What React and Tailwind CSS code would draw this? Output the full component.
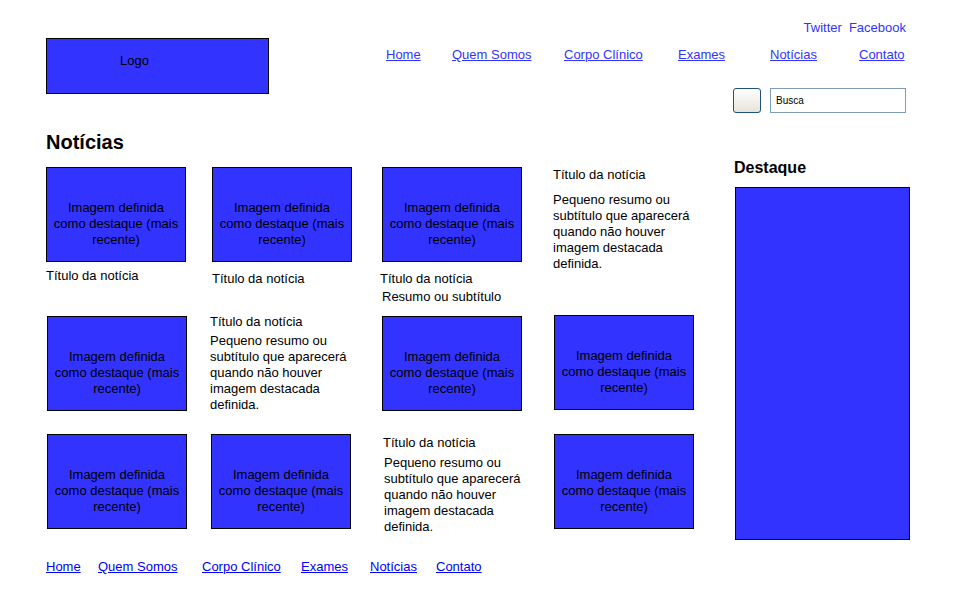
const ImageBox = ({ className = '' }) => (
  <div className={`w-[140px] h-[95px] border border-black bg-[#3333ff] pt-[32px] text-center leading-[16px] text-black ${className}`}>
    Imagem definida
    <br />
    como destaque (mais
    <br />
    recente)
  </div>
);

const Summary = ({ className = '' }) => (
  <p className={`leading-[16px] ${className}`}>
    Pequeno resumo ou
    <br />
    subtítulo que aparecerá
    <br />
    quando não houver
    <br />
    imagem destacada
    <br />
    definida.
  </p>
);

const Title = ({ className = '' }) => <p className={`leading-[16px] ${className}`}>Título da notícia</p>;

export default function App() {
  const topNav = [
    ['Home', 'w-[66px]'],
    ['Quem Somos', 'w-[112px]'],
    ['Corpo Clínico', 'w-[114px]'],
    ['Exames', 'w-[92px]'],
    ['Notícias', 'w-[89px]'],
    ['Contato', 'w-[47px]'],
  ];
  const footNav = [
    ['Home', 'w-[52px]'],
    ['Quem Somos', 'w-[104px]'],
    ['Corpo Clínico', 'w-[99px]'],
    ['Exames', 'w-[69px]'],
    ['Notícias', 'w-[66px]'],
    ['Contato', 'w-[60px]'],
  ];

  return (
    <div className="w-[960px] h-[600px] bg-white text-black text-[13px] font-['Liberation_Sans',Arial,sans-serif] overflow-hidden">
      {/* header */}
      <header className="flex pl-[46px] pr-[54px]">
        <div className="mt-[38px] w-[223px] h-[56px] border border-black bg-[#3333ff] pl-[73px] pt-[14px] leading-[16px]">
          Logo
        </div>
        <div className="ml-auto flex flex-col items-end">
          <div className="mt-[20px] flex gap-[7px] leading-[16px] text-[#3333ff]">
            <a href="#">Twitter</a>
            <a href="#">Facebook</a>
          </div>
          <nav className="mt-[11px] flex leading-[16px]">
            {topNav.map(([label, w]) => (
              <div key={label} className={w}>
                <a href="#" className="underline text-[#3333ff]">{label}</a>
              </div>
            ))}
          </nav>
          <div className="mt-[25px] flex gap-[9px]">
            <button className="w-[28px] h-[25px] rounded-[3px] border border-[#1c5180] bg-gradient-to-b from-white to-[#e6e3d8]" />
            <input
              readOnly
              defaultValue="Busca"
              className="w-[136px] h-[25px] border border-[#7f9db9] pl-[5px] text-[10px] text-black outline-none"
            />
          </div>
        </div>
      </header>

      {/* content */}
      <main className="flex pl-[46px]">
        <section className="w-[688px]">
          <h1 className="mt-[17px] text-[20px] leading-[24px] font-bold">Notícias</h1>

          <div className="mt-[13px] flex h-[148px]">
            <div className="w-[166px]">
              <ImageBox />
              <Title className="mt-[6px]" />
            </div>
            <div className="w-[170px]">
              <ImageBox />
              <Title className="mt-[9px]" />
            </div>
            <div className="w-[171px]">
              <ImageBox />
              <Title className="mt-[9px] -ml-[2px]" />
              <p className="mt-[2px] leading-[16px]">Resumo ou subtítulo</p>
            </div>
            <div>
              <Title />
              <Summary className="mt-[9px]" />
            </div>
          </div>

          <div className="flex h-[119px]">
            <div className="w-[166px]">
              <ImageBox className="ml-[1px] mt-[1px]" />
            </div>
            <div className="w-[170px] -ml-[2px] pr-[2px]">
              <Title className="-mt-[1px]" />
              <Summary className="mt-[3px]" />
            </div>
            <div className="w-[171px] ml-[2px]">
              <ImageBox className="mt-[1px]" />
            </div>
            <div>
              <ImageBox className="ml-[1px]" />
            </div>
          </div>

          <div className="flex h-[95px]">
            <div className="w-[166px]">
              <ImageBox className="ml-[1px]" />
            </div>
            <div className="w-[170px]">
              <ImageBox className="-ml-[1px]" />
            </div>
            <div className="w-[171px] pl-[1px]">
              <Title className="mt-[1px]" />
              <Summary className="mt-[4px] ml-[1px]" />
            </div>
            <div>
              <ImageBox className="ml-[1px]" />
            </div>
          </div>
        </section>

        <aside className="mt-[45px]">
          <h2 className="text-[16px] leading-[19px] font-bold">Destaque</h2>
          <div className="mt-[10px] ml-[1px] w-[175px] h-[353px] border border-black bg-[#3333ff]" />
        </aside>
      </main>

      {/* footer */}
      <footer className="mt-[19px] pl-[46px] flex leading-[16px]">
        {footNav.map(([label, w]) => (
          <div key={label} className={w}>
            <a href="#" className="underline text-[#0000ff]">{label}</a>
          </div>
        ))}
      </footer>
    </div>
  );
}
